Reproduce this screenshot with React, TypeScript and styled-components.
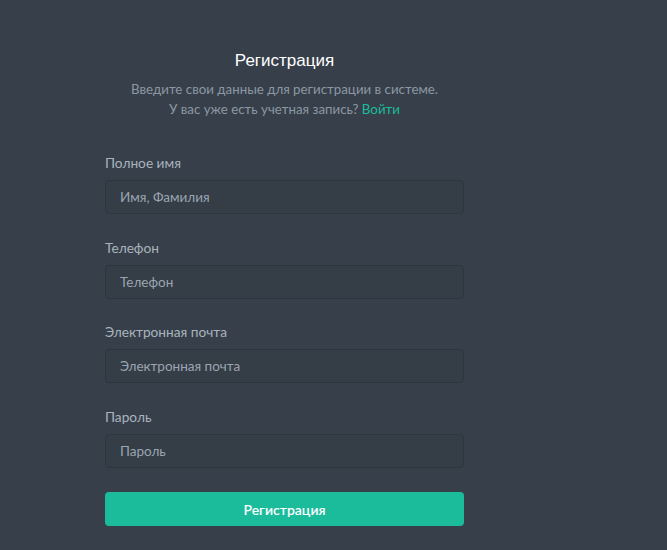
import styled, { createGlobalStyle } from 'styled-components';

const GlobalStyle = createGlobalStyle`
  html, body {
    margin: 0;
    padding: 0;
    background: #37404a;
  }
  body {
    font-family: Lato, 'Noto Sans', sans-serif;
  }
`;

const Page = styled.main`
  min-height: 550px;
  display: flex;
  padding: 49px 0 0 105px;
  box-sizing: border-box;
`;

const Form = styled.form`
  width: 359px;
  display: flex;
  flex-direction: column;
`;

const Header = styled.div`
  text-align: center;
  margin-bottom: 35px;
`;

const Title = styled.h1`
  margin: 0 0 6px;
  font-family: 'Liberation Sans', Arial, sans-serif;
  font-size: 17px;
  font-weight: 400;
  color: #ffffff;
  line-height: 24px;
`;

const Subtitle = styled.p`
  margin: 0;
  font-size: 13.3px;
  line-height: 20px;
  color: #8c97a3;
`;

const Link = styled.a`
  color: #1abc9c;
  text-decoration: none;
`;

const Field = styled.label`
  display: flex;
  flex-direction: column;
  gap: 8px;
  margin-bottom: 24.5px;
`;

const LabelText = styled.span`
  font-size: 13.7px;
  line-height: 18px;
  color: #a9b3be;
`;

const Input = styled.input`
  height: 34px;
  box-sizing: border-box;
  background: #353d47;
  border: 1px solid #2e353e;
  border-radius: 4px;
  padding: 0 14px;
  font-family: inherit;
  font-size: 13.5px;
  color: #c8d0d8;
  outline: none;

  &::placeholder {
    color: #9aa5b1;
  }
`;

const Submit = styled.button`
  height: 34px;
  border: none;
  border-radius: 4px;
  background: #1abc9c;
  color: #ffffff;
  font-family: inherit;
  font-size: 14px;
  font-weight: 600;
  cursor: pointer;
`;

const fields = [
  { label: 'Полное имя', placeholder: 'Имя, Фамилия', type: 'text' },
  { label: 'Телефон', placeholder: 'Телефон', type: 'tel' },
  { label: 'Электронная почта', placeholder: 'Электронная почта', type: 'email' },
  { label: 'Пароль', placeholder: 'Пароль', type: 'text' },
];

const App = () => (
  <>
    <GlobalStyle />
    <Page>
      <Form onSubmit={(e) => e.preventDefault()}>
        <Header>
          <Title>Регистрация</Title>
          <Subtitle>Введите свои данные для регистрации в системе.</Subtitle>
          <Subtitle>
            У вас уже есть учетная запись? <Link href="#">Войти</Link>
          </Subtitle>
        </Header>
        {fields.map((f) => (
          <Field key={f.label}>
            <LabelText>{f.label}</LabelText>
            <Input type={f.type} placeholder={f.placeholder} />
          </Field>
        ))}
        <Submit type="submit">Регистрация</Submit>
      </Form>
    </Page>
  </>
);

export default App;
